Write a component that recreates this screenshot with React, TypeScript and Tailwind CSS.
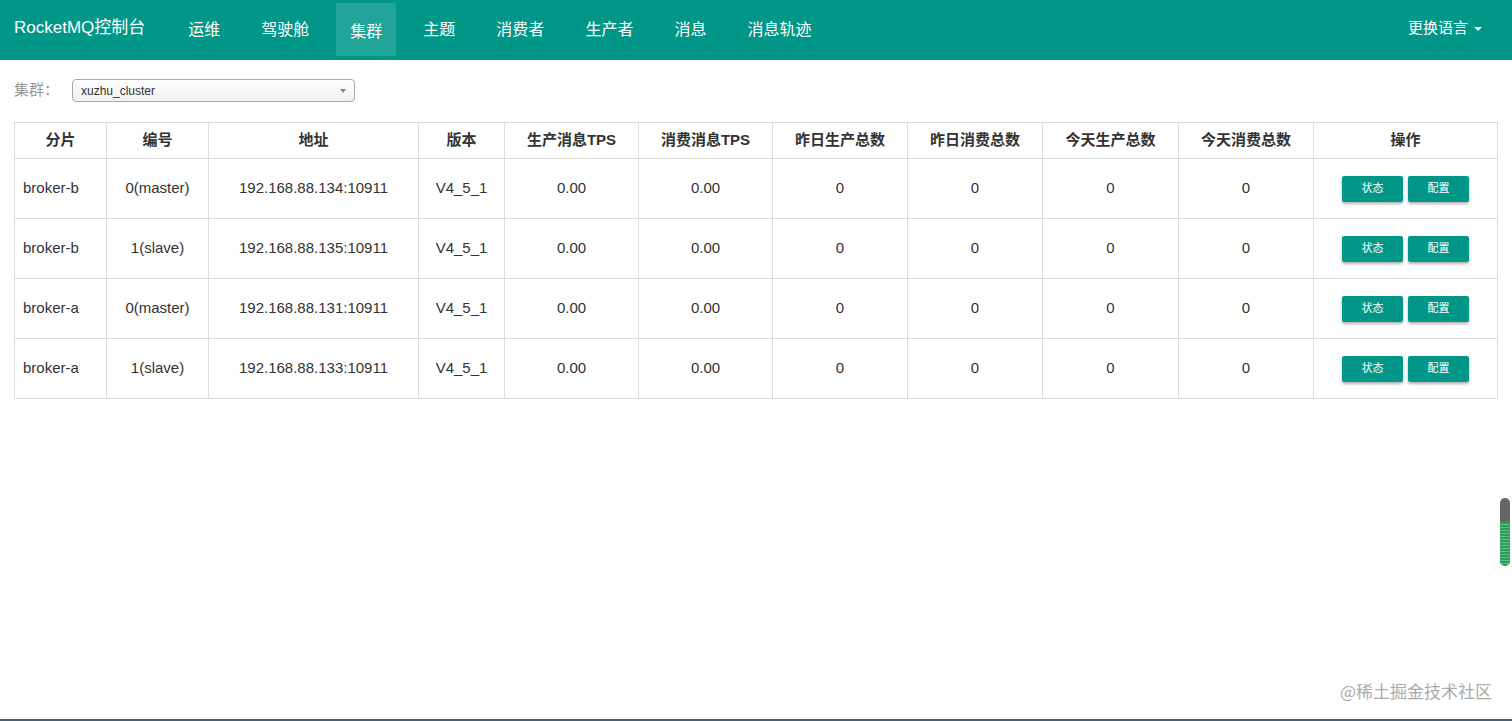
import { ChevronDown } from 'lucide-react';

const navItems = ['运维', '驾驶舱', '集群', '主题', '消费者', '生产者', '消息', '消息轨迹'];

const cols = [
  { title: '分片', w: 'w-[92px]' },
  { title: '编号', w: 'w-[102px]' },
  { title: '地址', w: 'w-[210px]' },
  { title: '版本', w: 'w-[86px]' },
  { title: '生产消息TPS', w: 'w-[134px]' },
  { title: '消费消息TPS', w: 'w-[134px]' },
  { title: '昨日生产总数', w: 'w-[135px]' },
  { title: '昨日消费总数', w: 'w-[135px]' },
  { title: '今天生产总数', w: 'w-[136px]' },
  { title: '今天消费总数', w: 'w-[135px]' },
  { title: '操作', w: 'w-[184px]' },
];

const rows = [
  ['broker-b', '0(master)', '192.168.88.134:10911'],
  ['broker-b', '1(slave)', '192.168.88.135:10911'],
  ['broker-a', '0(master)', '192.168.88.131:10911'],
  ['broker-a', '1(slave)', '192.168.88.133:10911'],
];

const font = { fontFamily: '"Liberation Sans", Arial, "Noto Sans CJK SC", sans-serif' };

export default function App() {
  return (
    <div className="relative w-[1512px] h-[721px] bg-white overflow-hidden text-[#333]" style={font}>
      <div className="h-[60px] bg-[#009688] flex items-stretch text-white">
        <div className="flex items-center pl-[14px] pr-[28px] text-[17px] h-[56px]">RocketMQ控制台</div>
        <div className="flex items-stretch gap-[13px] h-[56px] ml-[1px]">
          {navItems.map((n) => (
            <div key={n} className={`flex items-center px-[14px] text-[16px] pt-[4px] ${n === '集群' ? 'bg-[#1fa497] mt-[3px] pt-[1px]' : ''}`}>{n}</div>
          ))}
        </div>
        <div className="ml-auto flex items-center gap-[6px] pr-[30px] text-[15px] h-[56px]">
          更换语言
          <span className="w-0 h-0 border-l-[4px] border-r-[4px] border-t-[4px] border-l-transparent border-r-transparent border-t-white mt-[2px]" />
        </div>
      </div>

      <div className="flex items-center mt-[19px] pl-[14px] h-[23px]">
        <span className="text-[15px] text-[#999] w-[58px]">集群：</span>
        <div className="w-[283px] h-[23px] border border-[#aaa] rounded-[4px] flex items-center pl-[8px] pr-[8px] text-[12px] text-[#333] bg-gradient-to-b from-white to-[#f0f0f0]">
          xuzhu_cluster
          <span className="ml-auto w-0 h-0 border-l-[3px] border-r-[3px] border-t-[4px] border-l-transparent border-r-transparent border-t-[#888]" />
        </div>
      </div>

      <div className="mt-[20px] mx-[14px]">
        <table className="border-collapse border border-[#ddd] table-fixed w-[1483px]">
          <thead>
            <tr className="h-[36px]">
              {cols.map((c) => (
                <th key={c.title} className={`${c.w} border border-[#ddd] text-center text-[15px] font-bold text-[#333]`}>{c.title}</th>
              ))}
            </tr>
          </thead>
          <tbody>
            {rows.map((r, i) => (
              <tr key={i} className="h-[60px] text-[15px] text-[#333]">
                <td className="border border-[#ddd] pl-[8px]">{r[0]}</td>
                <td className="border border-[#ddd] text-center">{r[1]}</td>
                <td className="border border-[#ddd] text-center">{r[2]}</td>
                <td className="border border-[#ddd] text-center">V4_5_1</td>
                <td className="border border-[#ddd] text-center">0.00</td>
                <td className="border border-[#ddd] text-center">0.00</td>
                <td className="border border-[#ddd] text-center">0</td>
                <td className="border border-[#ddd] text-center">0</td>
                <td className="border border-[#ddd] text-center">0</td>
                <td className="border border-[#ddd] text-center">0</td>
                <td className="border border-[#ddd]">
                  <div className="flex justify-center gap-[5px]">
                    <button className="w-[61px] h-[26px] rounded-[2px] bg-[#009688] text-white text-[11px] shadow-[0_2px_3px_rgba(0,0,0,0.3)]">状态</button>
                    <button className="w-[61px] h-[26px] rounded-[2px] bg-[#009688] text-white text-[11px] shadow-[0_2px_3px_rgba(0,0,0,0.3)]">配置</button>
                  </div>
                </td>
              </tr>
            ))}
          </tbody>
        </table>
      </div>

      <div className="absolute left-[1500px] top-[498px] w-[10px] h-[68px] rounded-full bg-[#666] overflow-hidden flex flex-col justify-end">
        <div className="h-[44px] bg-[repeating-linear-gradient(to_bottom,#2f9c5c_0px,#2f9c5c_2px,#5fbf85_2px,#5fbf85_3px)] rounded-b-full" />
      </div>

      <div className="absolute right-[20px] bottom-[18px] text-[17px] text-[#aaa]" style={{ fontFamily: '"Noto Sans CJK SC", sans-serif' }}>@稀土掘金技术社区</div>
      <div className="absolute left-0 bottom-0 w-full h-[2px] bg-[#4a6070]" />
      <span className="hidden"><ChevronDown /></span>
    </div>
  );
}
